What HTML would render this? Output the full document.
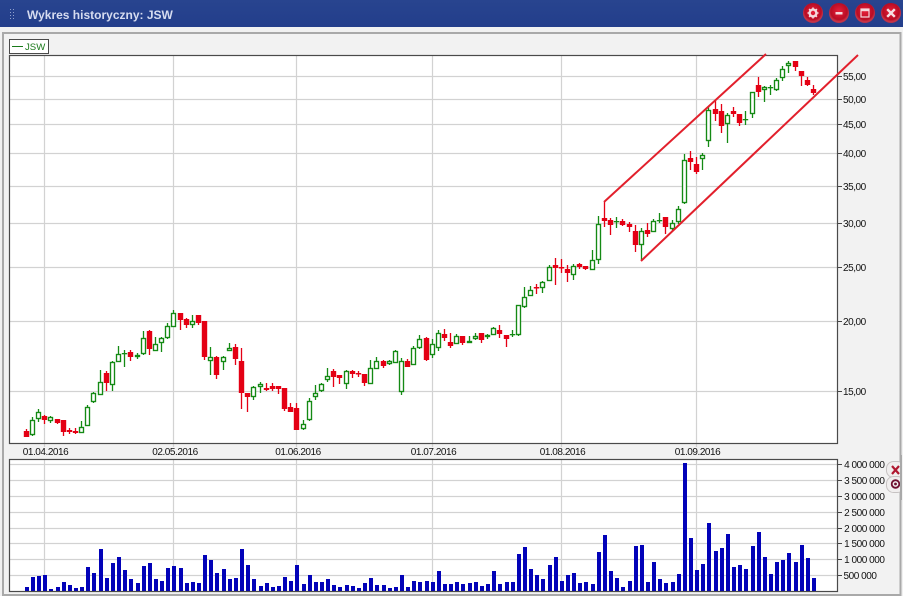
<!DOCTYPE html>
<html><head><meta charset="utf-8"><title>Wykres historyczny: JSW</title>
<style>
html,body{margin:0;padding:0;background:#fff;width:903px;height:596px;overflow:hidden}
svg{display:block;position:absolute;left:0;top:0}
text{font-family:"Liberation Sans",sans-serif;font-size:10px;letter-spacing:-.45px;fill:#111}
.r{text-anchor:end}.m{text-anchor:middle}
</style></head><body>
<svg id="s" width="903" height="596" viewBox="0 0 903 596" xmlns="http://www.w3.org/2000/svg">
<defs>
<radialGradient id="b" cx=".5" cy=".42" r=".6"><stop offset="0" stop-color="#e8203a"/><stop offset=".68" stop-color="#b80c24"/><stop offset=".85" stop-color="#c93548"/><stop offset="1" stop-color="#a9304f"/></radialGradient>
<linearGradient id="t" x1="0" y1="0" x2="0" y2="1"><stop offset="0" stop-color="#28448f"/><stop offset="1" stop-color="#233e8b"/></linearGradient>
</defs>
<rect x="0" y="27" width="903" height="569" fill="#f1f1f1"/>
<rect x="0" y="0" width="903" height="27" fill="url(#t)"/>
<g fill="#8fa0cc"><rect x="10" y="9" width="1" height="1"/><rect x="13" y="9" width="1" height="1"/><rect x="10" y="12" width="1" height="1"/><rect x="13" y="12" width="1" height="1"/><rect x="10" y="15" width="1" height="1"/><rect x="13" y="15" width="1" height="1"/><rect x="10" y="18" width="1" height="1"/><rect x="13" y="18" width="1" height="1"/></g>
<text x="27" y="19" style="font-size:12px;font-weight:bold;letter-spacing:0;fill:#d6dcf0">Wykres historyczny: JSW</text>
<g><circle cx="813" cy="13" r="10" fill="url(#b)"/><circle cx="839" cy="13" r="10" fill="url(#b)"/><circle cx="865" cy="13" r="10" fill="url(#b)"/><circle cx="891" cy="13" r="10" fill="url(#b)"/>
<circle cx="813" cy="13" r="3.4" fill="none" stroke="#f4d8dc" stroke-width="2.4"/><path d="M813 7.5v11M807.5 13h11M809.1 9.1l7.8 7.8M816.9 9.1l-7.8 7.8" stroke="#f4d8dc" stroke-width="1.6" fill="none" stroke-dasharray="2 7 2"/>
<rect x="835.5" y="12" width="7" height="2.5" fill="#f4d8dc"/>
<rect x="861" y="9" width="8" height="8" fill="none" stroke="#f4d8dc" stroke-width="1.2"/><rect x="861" y="9" width="8" height="2.2" fill="#f4d8dc"/>
<path d="M887.2 9.2l7.6 7.6M894.8 9.2l-7.6 7.6" stroke="#f6e0e3" stroke-width="2.4" fill="none"/></g>
<rect x="3" y="33" width="897.5" height="562" fill="#f2f2f2" stroke="#a9a9a9" stroke-width="2"/>
<rect x="9.5" y="55.5" width="828" height="388" fill="#fff"/>
<rect x="9.5" y="459.5" width="828" height="132" fill="#fff"/>
<g id="grid" stroke="#d2d2d2" stroke-width="1.2" fill="none">
<path d="M10 76.5H837M10 99.5H837M10 124.5H837M10 153.5H837M10 186.5H837M10 223.5H837M10 267.5H837M10 321.5H837M10 391.5H837"/>
<path d="M44.5 56V447M173.5 56V447M296.5 56V447M432.5 56V447M561.5 56V447M696.5 56V447"/>
<path d="M10 464.5H837M10 480.5H837M10 496.5H837M10 512.5H837M10 528.5H837M10 543.5H837M10 559.5H837M10 575.5H837"/>
<path d="M44.5 460V591M173.5 460V591M296.5 460V591M432.5 460V591M561.5 460V591M696.5 460V591"/>
</g>
<g id="bars" fill="#0202b8" shape-rendering="crispEdges"></g>
<g id="candles"></g>
<rect x="9.5" y="55.5" width="828" height="388" fill="none" stroke="#4a4a4a" stroke-width="1.2"/>
<rect x="9.5" y="459.5" width="828" height="132" fill="none" stroke="#4a4a4a" stroke-width="1.2"/>
<path d="M604 202L766 54M641 261L858 55" stroke="#e2202c" stroke-width="2" fill="none"/>
<path d="M838 76.5h4M838 99.5h4M838 124.5h4M838 153.5h4M838 186.5h4M838 223.5h4M838 267.5h4M838 321.5h4M838 391.5h4M838 464.5h4M838 480.5h4M838 496.5h4M838 512.5h4M838 528.5h4M838 543.5h4M838 559.5h4M838 575.5h4" stroke="#444" shape-rendering="crispEdges"/>
<g><text x="843" y="80">55,00</text><text x="843" y="103">50,00</text><text x="843" y="128">45,00</text><text x="843" y="157">40,00</text><text x="843" y="190">35,00</text><text x="843" y="227">30,00</text><text x="843" y="271">25,00</text><text x="843" y="325">20,00</text><text x="843" y="395">15,00</text></g>
<g><text class="m" x="45.5" y="455">01.04.2016</text><text class="m" x="175" y="455">02.05.2016</text><text class="m" x="298" y="455">01.06.2016</text><text class="m" x="433.5" y="455">01.07.2016</text><text class="m" x="562.5" y="455">01.08.2016</text><text class="m" x="697.5" y="455">01.09.2016</text></g>
<g><text class="r" x="884.5" y="468">4 000 000</text><text class="r" x="884.5" y="484">3 500 000</text><text class="r" x="884.5" y="500">3 000 000</text><text class="r" x="884.5" y="516">2 500 000</text><text class="r" x="884.5" y="532">2 000 000</text><text class="r" x="884.5" y="547">1 500 000</text><text class="r" x="884.5" y="563">1 000 000</text><text class="r" x="876.5" y="579">500 000</text></g>
<rect x="9.5" y="39.5" width="39" height="14" fill="#fff" stroke="#4a4a4a" shape-rendering="crispEdges"/>
<rect x="12" y="46" width="11" height="1" fill="#1a7a1a"/>
<text x="25" y="50" style="font-size:9.6px;letter-spacing:0;fill:#1a7a1a">JSW</text>
<g>
<rect x="886.5" y="461.5" width="18" height="16" rx="7" fill="#f0eeee" stroke="#c6c2c2"/>
<rect x="886.5" y="476.5" width="18" height="16" rx="7" fill="#f0eeee" stroke="#c6c2c2"/>
<path d="M892 466l7 8M899 466l-7 8" stroke="#b01830" stroke-width="2.2" fill="none"/>
<circle cx="895.5" cy="484" r="3.8" fill="none" stroke="#6e1030" stroke-width="1.8"/><circle cx="895.5" cy="484" r="1.4" fill="#6e1030"/>
<rect x="900" y="455" width="3" height="45" fill="#f2f2f2"/>
<rect x="900" y="455" width="2" height="45" fill="#a9a9a9"/>
</g>
</svg>
<script>
var S="http://www.w3.org/2000/svg";
function el(p,n,a){var e=document.createElementNS(S,n);for(var k in a)e.setAttribute(k,a[k]);p.appendChild(e);}
var tops=[441,411,408,405,447,441,426,435,444,441,381,399,327,414,369,351,390,417,429,378,369,417,423,384,378,384,429,426,429,345,360,399,387,417,414,327,375,417,438,429,441,438,411,423,375,
432,405,426,426,417,435,441,435,438,444,429,414,435,435,444,441,405,441,423,426,423,426,393,432,432,426,432,429,426,438,432,393,432,426,426,342,321,387,405,417,375,351,423,405,399,429,426,432,336,
285,393,414,441,423,318,315,426,366,417,429,426,402,69,294,390,372,249,333,324,282,381,375,387,318,276,351,402,366,360,339,366,315,354,414];
var bars=document.getElementById("bars"),cg=document.getElementById("candles");
function X(i){return Math.floor(26.3+6.15*i);}
tops.forEach(function(t,i){var h=Math.round((453-t)/3);el(bars,"rect",{x:X(i)-1,y:591-h,width:4,height:h});});
var G="#148a14",R="#e40014";
/* wickTop,wickBot,bodyTop,bodyBot,colour(1=green,0=red) */
var A=[[387,411,393,411,0],[352,407,360,405,1],[327,366,337,356,1],[344,372,348,359,0],[348,368,351,362,1],[356,372,358,369,0],[360,408,360,396,0],[384,402,390,396,0],[384,402,393,399,0],[363,400,382,398,1],[315,378,321,377,1],[276,308,279,305,1],[210,285,247,284,1],[213,273,219,249,0],[183,273,186,255,1],[138,186,163,185,1],[150,200,159,162,1],[150,183,156,171,0],[159,177,166,170,1],[93,165,115,163,1],[90,165,93,147,0],[111,153,133,152,1],[111,156,115,130,1],[70,118,78,115,1],[30,81,40,80,1],[40,90,40,60,0],[54,84,57,75,0],[45,84,62,74,1],[45,75,45,68,0],[63,180,63,171,0],[141,225,172,182,1],[168,237,171,225,0],[168,210,172,185,1],[130,152,144,152,1],
[132,195,141,177,0],[144,327,183,279,0],[279,336,279,291,0],[258,300,262,290,1],[246,279,253,260,1],[249,273,264,270,0],[249,273,258,267,0],[258,282,258,267,0],[264,333,264,327,0],[309,336,321,336,0],[309,390,324,390,0],[360,390,373,388,1],[294,363,304,361,1],[255,300,280,290,1],[250,276,253,272,1],[204,246,229,240,1],[207,261,213,231,0],[225,252,225,234,0],[210,267,213,251,1],[210,234,213,222,0],[213,231,219,221,0],[222,258,222,249,0],[180,252,205,251,1],[171,207,184,206,1],[180,204,183,198,0],[180,195,184,193,1],[150,189,154,188,1],[174,285,184,275,1],[177,201,183,201,0],[138,195,145,194,1],[105,147,118,143,1],[111,183,114,180,0],[117,174,133,164,1],[90,153,99,144,1],[87,123,102,114,0],[99,144,126,138,0],[102,132,108,131,1]];
var C=[[319,345,319,339,0],[318,338,334,338,1],[309,330,318,326,1],[310,339,310,330,0],[312,326,316,320,1],[291,315,295,314,1],[285,324,301,312,0],[316,351,316,327,0],[300,321,312,315,1],[226,318,226,314,1],[171,234,202,231,1],[168,198,181,197,1],[162,192,171,173,0],[153,189,157,174,1],[105,153,111,152,1],[84,165,105,114,0],[87,129,111,113,0],[105,156,117,129,0],[102,150,109,134,1],[99,117,102,110,0],[108,120,108,117,0]];
var D=[[360,420,390,420,1],[258,402,282,391,1],[216,291,264,273,0],[264,315,270,285,0],[261,294,273,277,1],[267,288,273,285,0],[276,306,282,291,0],[285,366,303,345,0],[294,390,304,344,1],[279,321,300,312,0],[267,306,274,305,1],[249,279,270,273,1],[261,312,261,291,0],[270,303,280,297,1],[228,282,237,276,1],[72,222,91,218,1],[63,120,85,95,0],[81,132,102,126,0],[69,120,76,88,1]];
var E=[[172,291,181,274,1],[150,213,178,193,0],[162,249,184,227,0],[190,279,196,223,1],[172,200,184,193,0],[193,228,193,218,0],[183,225,208,210,1],[127,204,127,193,1],[81,141,105,125,0],[109,156,110,119,1],[105,135,112,115,1],[84,123,91,119,1],[48,93,58,85,1],[33,69,40,49,1],[33,63,33,52,0],[63,108,63,79,0],[81,108,90,106,0],[105,136,118,130,0]];
var all=[];
function add(a,y0){a.forEach(function(c){all.push([y0+c[0]/3,y0+c[1]/3,y0+c[2]/3,y0+c[3]/3,c[4]]);});}
add(A,300);add(C,230);add(D,130);add(E,50);
all.forEach(function(c,i){
 var x=X(i),col=c[4]?G:R,wt=Math.round(c[0]),wb=Math.round(c[1]),bt=Math.round(c[2]),bb=Math.round(c[3]);
 el(cg,"rect",{x:x-.15,y:wt,width:1.3,height:Math.max(1,wb-wt),fill:col});
 var h=bb-bt;
 if(c[4]){
  if(h<2){el(cg,"rect",{x:x-2.2,y:bt,width:5.4,height:1.3,fill:col});}
  else el(cg,"rect",{x:x-1.5,y:bt+.5,width:4,height:h-1,fill:"#fff",stroke:col,"stroke-width":1.35});
 }else{
  el(cg,"rect",{x:x-2.2,y:bt,width:5.4,height:Math.max(1.5,h),fill:col});
 }
});
</script>
</body></html>
